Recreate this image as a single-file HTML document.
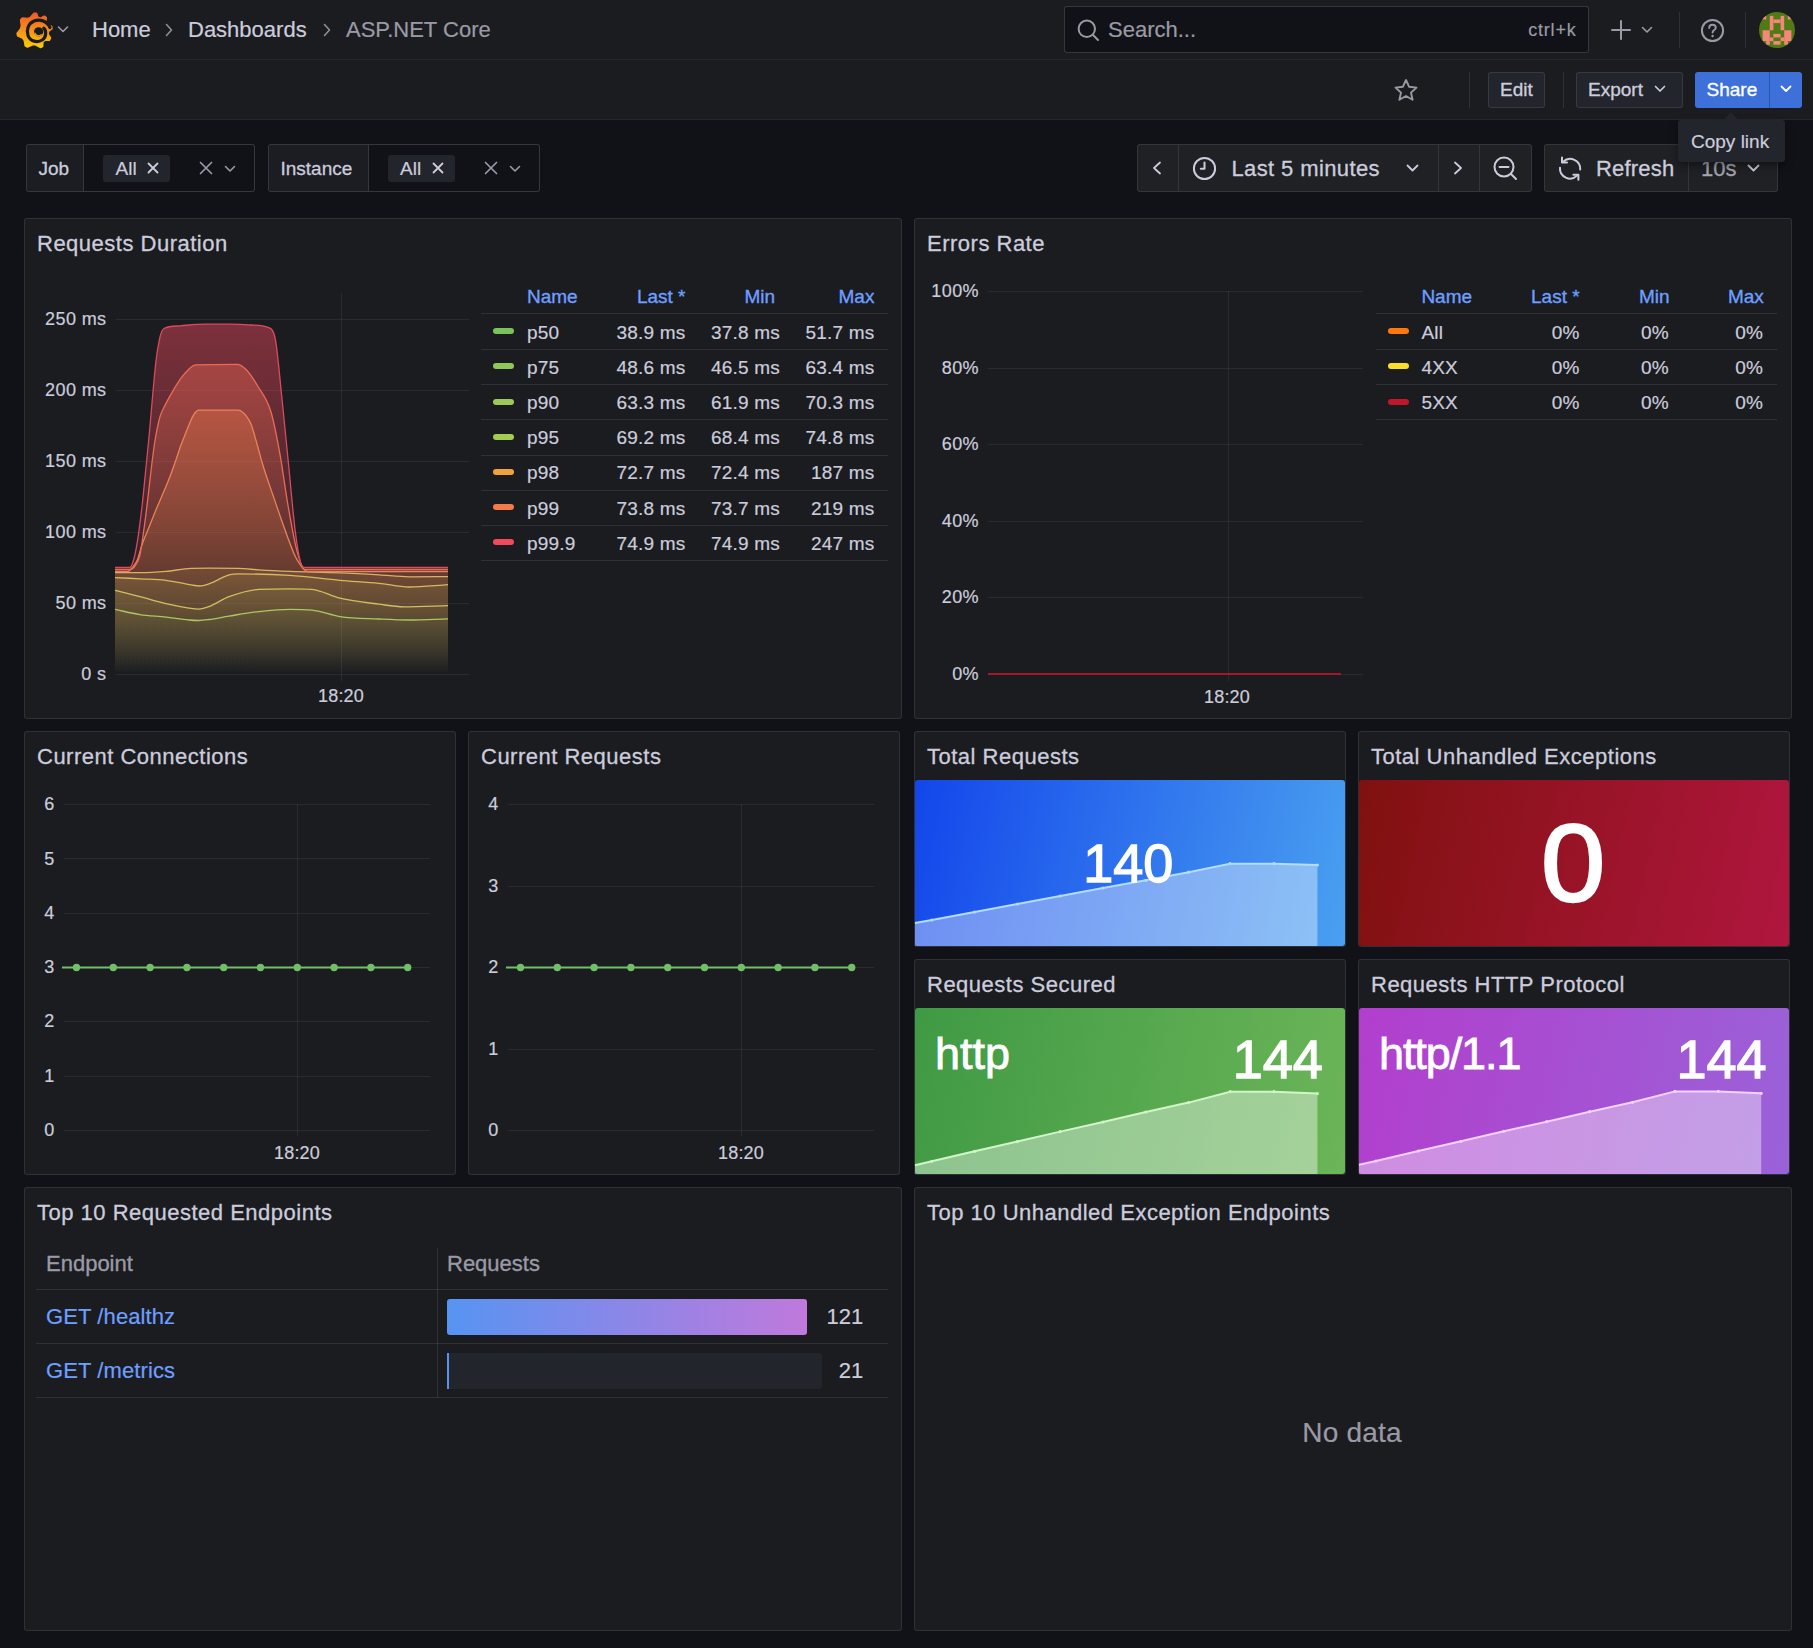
<!DOCTYPE html>
<html><head><meta charset="utf-8"><title>ASP.NET Core - Dashboards - Grafana</title>
<style>
html,body{margin:0;padding:0;}
body{width:1813px;height:1648px;overflow:hidden;background:#111217;position:relative;font-family:"Liberation Sans",sans-serif;}
.t{position:absolute;line-height:1;white-space:nowrap;-webkit-text-stroke-width:0.2px;}
svg{overflow:visible;}
</style></head><body>
<div style="position:absolute;left:0px;top:0px;width:1813px;height:59px;background:#1a1c20;"></div>
<div style="position:absolute;left:0px;top:59px;width:1813px;height:1px;background:rgba(204,204,220,0.12);"></div>
<div style="position:absolute;left:0px;top:60px;width:1813px;height:59px;background:#1a1c20;"></div>
<div style="position:absolute;left:0px;top:119px;width:1813px;height:1px;background:rgba(204,204,220,0.12);"></div>
<svg style="position:absolute;left:17px;top:12px;" width="34" height="37" viewBox="0 0 34 37">
<defs><linearGradient id="glg" x1="0" y1="0" x2="0" y2="1">
<stop offset="0" stop-color="#f05a28"/><stop offset="1" stop-color="#fbca0a"/></linearGradient></defs>
<polygon fill="url(#glg)" stroke="url(#glg)" stroke-width="1.6" stroke-linejoin="round" points="17.04,1.21 19.49,1.31 20.95,5.23 23.69,6.24 27.34,4.21 29.28,5.72 28.61,10.28 30.14,12.77 34.50,14.24 34.97,16.66 31.49,19.41 31.05,22.31 33.58,25.96 32.43,28.13 28.01,28.05 25.86,30.03 25.57,34.44 23.32,35.41 18.43,32.77 15.50,32.66 10.43,34.92 8.25,33.77 7.34,28.43 5.56,26.10 0.63,23.83 0.10,21.43 3.66,16.68 4.40,13.85 3.63,7.96 5.27,6.14 10.77,6.53 13.47,5.39"/>
<path fill="none" stroke="#181b1f" stroke-width="3.2" stroke-linecap="round" d="M33,15.5 C30,8.5 22.5,7 17,9 C11,11.5 9.2,18.5 11,23.5 C13.2,29.5 20.5,31 25.2,28 C29.2,25.2 29.8,19.5 26.8,16.2"/>
<circle cx="21.6" cy="19.8" r="4.6" fill="#181b1f"/>
<path fill="none" stroke="#f7a01c" stroke-width="1.3" stroke-linecap="round" d="M24.2,22.8 C22,24.6 18.8,23.8 18,21.2"/>
</svg>
<svg style="position:absolute;left:57px;top:25px;" width="12" height="9" viewBox="0 0 12 9"><polyline points="1.5,2 6,6.5 10.5,2" fill="none" stroke="#9a9aa6" stroke-width="1.6" stroke-linecap="round" stroke-linejoin="round"/></svg>
<div class="t" style="top:18.58px;font-size:22px;color:#ccccdc;left:92.00px;">Home</div>
<svg style="position:absolute;left:164px;top:22px;" width="10" height="16" viewBox="0 0 10 16"><polyline points="2.5,2.5 7.5,8 2.5,13.5" fill="none" stroke="#8e8e9a" stroke-width="1.6" stroke-linecap="round" stroke-linejoin="round"/></svg>
<div class="t" style="top:18.58px;font-size:22px;color:#ccccdc;left:188.00px;">Dashboards</div>
<svg style="position:absolute;left:322px;top:22px;" width="10" height="16" viewBox="0 0 10 16"><polyline points="2.5,2.5 7.5,8 2.5,13.5" fill="none" stroke="#8e8e9a" stroke-width="1.6" stroke-linecap="round" stroke-linejoin="round"/></svg>
<div class="t" style="top:18.58px;font-size:22px;color:#9a9aa6;left:346.00px;">ASP.NET Core</div>
<div style="position:absolute;left:1064px;top:6px;width:525px;height:47px;box-sizing:border-box;background:#111217;border:1px solid rgba(204,204,220,0.2);border-radius:3px;"></div>
<svg style="position:absolute;left:1077px;top:19px;" width="23" height="23" viewBox="0 0 23 23"><circle cx="9.8" cy="9.8" r="8.2" fill="none" stroke="#9a9aa6" stroke-width="2"/><line x1="15.8" y1="15.8" x2="21" y2="21" stroke="#9a9aa6" stroke-width="2" stroke-linecap="round"/></svg>
<div class="t" style="top:18.58px;font-size:22px;color:#9a9aa6;left:1108.00px;">Search...</div>
<div class="t" style="top:21.26px;font-size:18px;color:#9a9aa6;letter-spacing:0.8px;right:236.50px;">ctrl+k</div>
<svg style="position:absolute;left:1610px;top:19px;" width="22" height="22" viewBox="0 0 22 22"><line x1="11" y1="2" x2="11" y2="20" stroke="#9a9aa6" stroke-width="2" stroke-linecap="round"/><line x1="2" y1="11" x2="20" y2="11" stroke="#9a9aa6" stroke-width="2" stroke-linecap="round"/></svg>
<svg style="position:absolute;left:1641px;top:26px;" width="12" height="8" viewBox="0 0 12 8"><polyline points="1.5,1.5 6,6 10.5,1.5" fill="none" stroke="#9a9aa6" stroke-width="1.6" stroke-linecap="round" stroke-linejoin="round"/></svg>
<div style="position:absolute;left:1679px;top:12px;width:1px;height:36px;background:rgba(204,204,220,0.12);"></div>
<svg style="position:absolute;left:1700px;top:18px;" width="25" height="25" viewBox="0 0 25 25"><circle cx="12.5" cy="12.5" r="10.6" fill="none" stroke="#9a9aa6" stroke-width="2"/><path d="M9.2,10 C9.2,7.8 10.8,6.8 12.5,6.8 C14.4,6.8 15.8,8 15.8,9.8 C15.8,12 12.6,12.2 12.6,14.5" fill="none" stroke="#9a9aa6" stroke-width="1.9" stroke-linecap="round"/><circle cx="12.6" cy="18" r="1.2" fill="#9a9aa6"/></svg>
<div style="position:absolute;left:1745px;top:12px;width:1px;height:36px;background:rgba(204,204,220,0.12);"></div>
<svg style="position:absolute;left:1759px;top:12px;" width="36" height="36" viewBox="0 0 36 36">
<defs><clipPath id="avc"><circle cx="18" cy="18" r="18"/></clipPath></defs>
<g clip-path="url(#avc)">
<rect width="36" height="36" fill="#507a16"/>
<g fill="#f4877a"><rect x="3.60" y="3.87" width="3.60" height="3.60"/><rect x="28.80" y="3.87" width="3.60" height="3.60"/><rect x="10.80" y="3.87" width="3.60" height="14.40"/><rect x="21.60" y="3.87" width="3.60" height="14.40"/><rect x="14.40" y="7.47" width="7.20" height="3.60"/><rect x="3.60" y="18.27" width="7.20" height="10.80"/><rect x="25.20" y="18.27" width="7.20" height="10.80"/><rect x="14.40" y="21.87" width="7.20" height="3.60"/><rect x="10.80" y="25.47" width="3.60" height="3.60"/><rect x="21.60" y="25.47" width="3.60" height="3.60"/><rect x="7.20" y="29.07" width="3.60" height="3.60"/><rect x="25.20" y="29.07" width="3.60" height="3.60"/><rect x="14.40" y="29.07" width="7.20" height="3.60"/></g></g>
</svg>
<svg style="position:absolute;left:1393px;top:78px;" width="26" height="24" viewBox="0 0 26 24"><polygon points="13,2 16.2,8.8 23.5,9.6 18,14.6 19.6,21.8 13,18 6.4,21.8 8,14.6 2.5,9.6 9.8,8.8" fill="none" stroke="#9a9aa6" stroke-width="1.9" stroke-linejoin="round"/></svg>
<div style="position:absolute;left:1469px;top:72px;width:1px;height:36px;background:rgba(204,204,220,0.12);"></div>
<div style="position:absolute;left:1488px;top:72px;width:57px;height:36px;box-sizing:border-box;background:#22252b;border:1px solid rgba(204,204,220,0.12);border-radius:3px;"></div>
<div class="t" style="top:80.22px;font-size:19px;color:#ccccdc;font-weight:700;left:1500.00px;font-weight:400;-webkit-text-stroke:0.35px #ccccdc;">Edit</div>
<div style="position:absolute;left:1563px;top:72px;width:1px;height:36px;background:rgba(204,204,220,0.12);"></div>
<div style="position:absolute;left:1576px;top:72px;width:107px;height:36px;box-sizing:border-box;background:#22252b;border:1px solid rgba(204,204,220,0.12);border-radius:3px;"></div>
<div class="t" style="top:80.22px;font-size:19px;color:#ccccdc;left:1588.00px;-webkit-text-stroke:0.35px #ccccdc;">Export</div>
<svg style="position:absolute;left:1654px;top:85px;" width="12" height="8" viewBox="0 0 12 8"><polyline points="1.5,1.5 6,6 10.5,1.5" fill="none" stroke="#ccccdc" stroke-width="1.7" stroke-linecap="round" stroke-linejoin="round"/></svg>
<div style="position:absolute;left:1695px;top:72px;width:107px;height:36px;background:#3d71d9;border-radius:3px;"></div>
<div style="position:absolute;left:1769px;top:72px;width:1px;height:36px;background:#2a55ad;"></div>
<div class="t" style="top:80.22px;font-size:19px;color:#ffffff;left:1706.50px;-webkit-text-stroke:0.35px #ffffff;">Share</div>
<svg style="position:absolute;left:1780px;top:85px;" width="12" height="8" viewBox="0 0 12 8"><polyline points="1.5,1.5 6,6 10.5,1.5" fill="none" stroke="#ffffff" stroke-width="1.8" stroke-linecap="round" stroke-linejoin="round"/></svg>
<div style="position:absolute;left:26px;top:144px;width:229px;height:48px;box-sizing:border-box;background:#111217;border:1px solid rgba(204,204,220,0.2);border-radius:3px;"></div>
<div style="position:absolute;left:27px;top:145px;width:56px;height:46px;background:#1b1d22;border-radius:2px 0 0 2px;"></div>
<div style="position:absolute;left:83px;top:145px;width:1px;height:46px;background:rgba(204,204,220,0.2);"></div>
<div class="t" style="top:159.12px;font-size:19px;color:#ccccdc;left:38.50px;-webkit-text-stroke:0.3px #ccccdc;">Job</div>
<div style="position:absolute;left:103px;top:155px;width:67px;height:27px;background:#22252b;border-radius:3px;"></div>
<div class="t" style="top:159.12px;font-size:19px;color:#ccccdc;left:115.50px;">All</div>
<svg style="position:absolute;left:146.5px;top:162px;" width="12" height="12" viewBox="0 0 12 12"><path d="M1.5,1.5 L10.5,10.5 M10.5,1.5 L1.5,10.5" stroke="#ccccdc" stroke-width="1.8" stroke-linecap="round"/></svg>
<svg style="position:absolute;left:199px;top:161px;" width="14" height="14" viewBox="0 0 14 14"><path d="M1.5,1.5 L12.5,12.5 M12.5,1.5 L1.5,12.5" stroke="#9a9aa6" stroke-width="1.7" stroke-linecap="round"/></svg>
<svg style="position:absolute;left:224px;top:165px;" width="12" height="8" viewBox="0 0 12 8"><polyline points="1.5,1.5 6,6 10.5,1.5" fill="none" stroke="#9a9aa6" stroke-width="1.6" stroke-linecap="round" stroke-linejoin="round"/></svg>
<div style="position:absolute;left:268px;top:144px;width:272px;height:48px;box-sizing:border-box;background:#111217;border:1px solid rgba(204,204,220,0.2);border-radius:3px;"></div>
<div style="position:absolute;left:269px;top:145px;width:99px;height:46px;background:#1b1d22;border-radius:2px 0 0 2px;"></div>
<div style="position:absolute;left:368px;top:145px;width:1px;height:46px;background:rgba(204,204,220,0.2);"></div>
<div class="t" style="top:159.12px;font-size:19px;color:#ccccdc;left:280.50px;-webkit-text-stroke:0.3px #ccccdc;">Instance</div>
<div style="position:absolute;left:388px;top:155px;width:67px;height:27px;background:#22252b;border-radius:3px;"></div>
<div class="t" style="top:159.12px;font-size:19px;color:#ccccdc;left:400.00px;">All</div>
<svg style="position:absolute;left:431.5px;top:162px;" width="12" height="12" viewBox="0 0 12 12"><path d="M1.5,1.5 L10.5,10.5 M10.5,1.5 L1.5,10.5" stroke="#ccccdc" stroke-width="1.8" stroke-linecap="round"/></svg>
<svg style="position:absolute;left:484px;top:161px;" width="14" height="14" viewBox="0 0 14 14"><path d="M1.5,1.5 L12.5,12.5 M12.5,1.5 L1.5,12.5" stroke="#9a9aa6" stroke-width="1.7" stroke-linecap="round"/></svg>
<svg style="position:absolute;left:509px;top:165px;" width="12" height="8" viewBox="0 0 12 8"><polyline points="1.5,1.5 6,6 10.5,1.5" fill="none" stroke="#9a9aa6" stroke-width="1.6" stroke-linecap="round" stroke-linejoin="round"/></svg>
<div style="position:absolute;left:1137px;top:144px;width:395px;height:48px;box-sizing:border-box;background:#1f2125;border:1px solid rgba(204,204,220,0.12);border-radius:3px;"></div>
<div style="position:absolute;left:1178px;top:145px;width:1px;height:46px;background:rgba(204,204,220,0.12);"></div>
<div style="position:absolute;left:1438px;top:145px;width:1px;height:46px;background:rgba(204,204,220,0.12);"></div>
<div style="position:absolute;left:1479px;top:145px;width:1px;height:46px;background:rgba(204,204,220,0.12);"></div>
<svg style="position:absolute;left:1150px;top:160px;" width="14" height="16" viewBox="0 0 14 16"><polyline points="10,2.5 4,8 10,13.5" fill="none" stroke="#ccccdc" stroke-width="1.8" stroke-linecap="round" stroke-linejoin="round"/></svg>
<svg style="position:absolute;left:1192px;top:156px;" width="25" height="25" viewBox="0 0 25 25"><circle cx="12.5" cy="12.5" r="10.6" fill="none" stroke="#ccccdc" stroke-width="2"/><polyline points="12.5,6.5 12.5,12.8 8.8,12.8" fill="none" stroke="#ccccdc" stroke-width="2" stroke-linecap="round" stroke-linejoin="round"/></svg>
<div class="t" style="top:157.88px;font-size:22px;color:#ccccdc;letter-spacing:0.38px;left:1231.50px;-webkit-text-stroke:0.3px #ccccdc;">Last 5 minutes</div>
<svg style="position:absolute;left:1406px;top:164px;" width="14" height="9" viewBox="0 0 14 9"><polyline points="1.5,1.5 6.5,6.5 11.5,1.5" fill="none" stroke="#ccccdc" stroke-width="1.8" stroke-linecap="round" stroke-linejoin="round"/></svg>
<svg style="position:absolute;left:1451px;top:160px;" width="14" height="16" viewBox="0 0 14 16"><polyline points="4,2.5 10,8 4,13.5" fill="none" stroke="#ccccdc" stroke-width="1.8" stroke-linecap="round" stroke-linejoin="round"/></svg>
<svg style="position:absolute;left:1493px;top:156px;" width="26" height="26" viewBox="0 0 26 26"><circle cx="11" cy="11" r="9.5" fill="none" stroke="#ccccdc" stroke-width="2"/><line x1="6.5" y1="11" x2="15.5" y2="11" stroke="#ccccdc" stroke-width="2" stroke-linecap="round"/><line x1="18" y1="18" x2="23" y2="23" stroke="#ccccdc" stroke-width="2" stroke-linecap="round"/></svg>
<div style="position:absolute;left:1544px;top:144px;width:234px;height:48px;box-sizing:border-box;background:#1f2125;border:1px solid rgba(204,204,220,0.12);border-radius:3px;"></div>
<div style="position:absolute;left:1688px;top:145px;width:1px;height:46px;background:rgba(204,204,220,0.12);"></div>
<svg style="position:absolute;left:1557px;top:155px;" width="26" height="27" viewBox="0 0 26 27"><g fill="none" stroke="#ccccdc" stroke-width="2" stroke-linecap="round" stroke-linejoin="round"><path d="M6.2,6.8 A10,10 0 0 1 23.2,14.5"/><polyline points="5,2.5 5,7.6 10,7.6"/><path d="M20,20.6 A10,10 0 0 1 3,12.8"/><polyline points="21.4,24.8 21.4,19.7 16.4,19.7"/></g></svg>
<div class="t" style="top:157.88px;font-size:22px;color:#ccccdc;letter-spacing:0.2px;left:1596.00px;-webkit-text-stroke:0.3px #ccccdc;">Refresh</div>
<div class="t" style="top:157.68px;font-size:22px;color:#a4a4ae;left:1701.00px;-webkit-text-stroke:0.3px #a4a4ae;">10s</div>
<svg style="position:absolute;left:1747px;top:164px;" width="13" height="8" viewBox="0 0 13 8"><polyline points="1.5,1.5 6.5,6.5 11.5,1.5" fill="none" stroke="#ccccdc" stroke-width="1.8" stroke-linecap="round" stroke-linejoin="round"/></svg>
<div style="position:absolute;left:1678px;top:120px;width:107px;height:42px;background:#22252b;border-radius:3px;box-shadow:0 4px 8px rgba(0,0,0,0.4);"></div>
<svg style="position:absolute;left:1723px;top:111px;" width="16" height="10" viewBox="0 0 16 10"><polygon points="0,9.5 8,1 16,9.5" fill="#22252b"/></svg>
<div class="t" style="top:132.32px;font-size:19px;color:#ccccdc;left:1691.00px;">Copy link</div>
<div style="position:absolute;left:24px;top:218px;width:878px;height:501px;box-sizing:border-box;background:#1a1c20;border:1px solid rgba(204,204,220,0.12);border-radius:3px;"></div>
<div class="t" style="top:233.08px;font-size:22px;color:#ccccdc;letter-spacing:0.5px;left:37.00px;-webkit-text-stroke:0.3px #ccccdc;">Requests Duration</div>
<div style="position:absolute;left:914px;top:218px;width:878px;height:501px;box-sizing:border-box;background:#1a1c20;border:1px solid rgba(204,204,220,0.12);border-radius:3px;"></div>
<div class="t" style="top:233.08px;font-size:22px;color:#ccccdc;letter-spacing:0.5px;left:927.00px;-webkit-text-stroke:0.3px #ccccdc;">Errors Rate</div>
<div style="position:absolute;left:24px;top:731px;width:432px;height:444px;box-sizing:border-box;background:#1a1c20;border:1px solid rgba(204,204,220,0.12);border-radius:3px;"></div>
<div class="t" style="top:746.08px;font-size:22px;color:#ccccdc;letter-spacing:0.5px;left:37.00px;-webkit-text-stroke:0.3px #ccccdc;">Current Connections</div>
<div style="position:absolute;left:468px;top:731px;width:432px;height:444px;box-sizing:border-box;background:#1a1c20;border:1px solid rgba(204,204,220,0.12);border-radius:3px;"></div>
<div class="t" style="top:746.08px;font-size:22px;color:#ccccdc;letter-spacing:0.5px;left:481.00px;-webkit-text-stroke:0.3px #ccccdc;">Current Requests</div>
<div style="position:absolute;left:914px;top:731px;width:432px;height:216px;box-sizing:border-box;background:#1a1c20;border:1px solid rgba(204,204,220,0.12);border-radius:3px;"></div>
<div class="t" style="top:746.08px;font-size:22px;color:#ccccdc;letter-spacing:0.5px;left:927.00px;-webkit-text-stroke:0.3px #ccccdc;">Total Requests</div>
<div style="position:absolute;left:1358px;top:731px;width:432px;height:216px;box-sizing:border-box;background:#1a1c20;border:1px solid rgba(204,204,220,0.12);border-radius:3px;"></div>
<div class="t" style="top:746.08px;font-size:22px;color:#ccccdc;letter-spacing:0.5px;left:1371.00px;-webkit-text-stroke:0.3px #ccccdc;">Total Unhandled Exceptions</div>
<div style="position:absolute;left:914px;top:959px;width:432px;height:216px;box-sizing:border-box;background:#1a1c20;border:1px solid rgba(204,204,220,0.12);border-radius:3px;"></div>
<div class="t" style="top:974.08px;font-size:22px;color:#ccccdc;letter-spacing:0.5px;left:927.00px;-webkit-text-stroke:0.3px #ccccdc;">Requests Secured</div>
<div style="position:absolute;left:1358px;top:959px;width:432px;height:216px;box-sizing:border-box;background:#1a1c20;border:1px solid rgba(204,204,220,0.12);border-radius:3px;"></div>
<div class="t" style="top:974.08px;font-size:22px;color:#ccccdc;letter-spacing:0.5px;left:1371.00px;-webkit-text-stroke:0.3px #ccccdc;">Requests HTTP Protocol</div>
<div style="position:absolute;left:24px;top:1187px;width:878px;height:444px;box-sizing:border-box;background:#1a1c20;border:1px solid rgba(204,204,220,0.12);border-radius:3px;"></div>
<div class="t" style="top:1202.08px;font-size:22px;color:#ccccdc;letter-spacing:0.5px;left:37.00px;-webkit-text-stroke:0.3px #ccccdc;">Top 10 Requested Endpoints</div>
<div style="position:absolute;left:914px;top:1187px;width:878px;height:444px;box-sizing:border-box;background:#1a1c20;border:1px solid rgba(204,204,220,0.12);border-radius:3px;"></div>
<div class="t" style="top:1202.08px;font-size:22px;color:#ccccdc;letter-spacing:0.5px;left:927.00px;-webkit-text-stroke:0.3px #ccccdc;">Top 10 Unhandled Exception Endpoints</div>
<div style="position:absolute;left:116px;top:319px;width:353px;height:1px;background:rgba(204,204,220,0.09);"></div>
<div class="t" style="top:309.96px;font-size:18px;color:#ccccdc;letter-spacing:0.4px;right:1706.50px;">250 ms</div>
<div style="position:absolute;left:116px;top:390px;width:353px;height:1px;background:rgba(204,204,220,0.09);"></div>
<div class="t" style="top:380.96px;font-size:18px;color:#ccccdc;letter-spacing:0.4px;right:1706.50px;">200 ms</div>
<div style="position:absolute;left:116px;top:461px;width:353px;height:1px;background:rgba(204,204,220,0.09);"></div>
<div class="t" style="top:451.96px;font-size:18px;color:#ccccdc;letter-spacing:0.4px;right:1706.50px;">150 ms</div>
<div style="position:absolute;left:116px;top:532px;width:353px;height:1px;background:rgba(204,204,220,0.09);"></div>
<div class="t" style="top:522.96px;font-size:18px;color:#ccccdc;letter-spacing:0.4px;right:1706.50px;">100 ms</div>
<div style="position:absolute;left:116px;top:603px;width:353px;height:1px;background:rgba(204,204,220,0.09);"></div>
<div class="t" style="top:593.96px;font-size:18px;color:#ccccdc;letter-spacing:0.4px;right:1706.50px;">50 ms</div>
<div style="position:absolute;left:116px;top:674px;width:353px;height:1px;background:rgba(204,204,220,0.09);"></div>
<div class="t" style="top:664.96px;font-size:18px;color:#ccccdc;letter-spacing:0.4px;right:1706.50px;">0 s</div>
<div style="position:absolute;left:341px;top:293px;width:1px;height:388px;background:rgba(204,204,220,0.09);"></div>
<div class="t" style="top:687.36px;font-size:18px;color:#ccccdc;letter-spacing:0.2px;left:41.00px;width:600px;text-align:center;">18:20</div>
<svg style="position:absolute;left:0px;top:0px;pointer-events:none;" width="1813" height="1648" viewBox="0 0 1813 1648"><defs><linearGradient id="g0" gradientUnits="userSpaceOnUse" x1="0" y1="293" x2="0" y2="674"><stop offset="0" stop-color="#7ac35c" stop-opacity="0.5"/><stop offset="1" stop-color="#7ac35c" stop-opacity="0"/></linearGradient><linearGradient id="g1" gradientUnits="userSpaceOnUse" x1="0" y1="293" x2="0" y2="674"><stop offset="0" stop-color="#90c75a" stop-opacity="0.5"/><stop offset="1" stop-color="#90c75a" stop-opacity="0"/></linearGradient><linearGradient id="g2" gradientUnits="userSpaceOnUse" x1="0" y1="293" x2="0" y2="674"><stop offset="0" stop-color="#9cc95a" stop-opacity="0.5"/><stop offset="1" stop-color="#9cc95a" stop-opacity="0"/></linearGradient><linearGradient id="g3" gradientUnits="userSpaceOnUse" x1="0" y1="293" x2="0" y2="674"><stop offset="0" stop-color="#a4cb52" stop-opacity="0.5"/><stop offset="1" stop-color="#a4cb52" stop-opacity="0"/></linearGradient><linearGradient id="g4" gradientUnits="userSpaceOnUse" x1="0" y1="293" x2="0" y2="674"><stop offset="0" stop-color="#f2a23c" stop-opacity="0.5"/><stop offset="1" stop-color="#f2a23c" stop-opacity="0"/></linearGradient><linearGradient id="g5" gradientUnits="userSpaceOnUse" x1="0" y1="293" x2="0" y2="674"><stop offset="0" stop-color="#f27a4c" stop-opacity="0.5"/><stop offset="1" stop-color="#f27a4c" stop-opacity="0"/></linearGradient><linearGradient id="g6" gradientUnits="userSpaceOnUse" x1="0" y1="293" x2="0" y2="674"><stop offset="0" stop-color="#f2495c" stop-opacity="0.5"/><stop offset="1" stop-color="#f2495c" stop-opacity="0"/></linearGradient></defs><path d="M115.00,609.40 C123.33,611.13 131.67,613.33 140.00,614.60 C148.67,615.92 157.33,616.14 166.00,617.10 C173.67,617.95 181.33,619.33 189.00,620.00 C192.33,620.29 195.67,620.50 199.00,620.50 C202.33,620.50 205.67,619.95 209.00,619.50 C215.67,618.60 222.33,617.17 229.00,616.10 C239.00,614.50 249.00,612.70 259.00,611.60 C269.33,610.46 279.67,609.40 290.00,609.40 C297.33,609.40 304.67,609.40 312.00,610.10 C321.33,610.99 330.67,615.23 340.00,616.60 C353.00,618.51 366.00,618.38 379.00,619.00 C389.00,619.47 399.00,620.00 409.00,620.00 C422.00,620.00 435.00,619.20 448.00,618.80 L448,674 L115,674 Z" fill="url(#g0)"/><path d="M115.00,590.30 C123.33,592.43 131.67,594.51 140.00,596.70 C148.67,598.98 157.33,601.70 166.00,603.70 C173.67,605.47 181.33,606.98 189.00,608.10 C192.33,608.59 195.67,609.10 199.00,609.10 C202.33,609.10 205.67,607.84 209.00,606.60 C215.67,604.12 222.33,599.17 229.00,596.70 C239.00,592.99 249.00,589.78 259.00,589.30 C269.33,588.80 279.67,588.80 290.00,588.80 C297.33,588.80 304.67,588.80 312.00,589.30 C321.33,589.94 330.67,596.00 340.00,598.20 C353.00,601.27 366.00,602.52 379.00,604.20 C387.33,605.27 395.67,606.80 404.00,606.80 C418.67,606.80 433.33,606.00 448.00,605.60 L448,674 L115,674 Z" fill="url(#g1)"/><path d="M115.00,577.60 C123.33,578.00 131.67,578.36 140.00,578.80 C148.67,579.26 157.33,579.27 166.00,580.30 C174.33,581.29 182.67,583.42 191.00,584.80 C193.67,585.24 196.33,586.00 199.00,586.00 C202.33,586.00 205.67,584.91 209.00,583.80 C215.67,581.58 222.33,576.72 229.00,574.90 C232.33,573.99 235.67,573.90 239.00,573.90 C256.00,573.90 273.00,574.32 290.00,575.40 C306.67,576.46 323.33,578.84 340.00,580.30 C353.00,581.44 366.00,582.00 379.00,583.30 C389.00,584.30 399.00,587.00 409.00,587.00 C422.00,587.00 435.00,585.40 448.00,584.60 L448,674 L115,674 Z" fill="url(#g2)"/><path d="M115.00,572.70 C123.33,572.70 131.67,572.70 140.00,572.70 C148.67,572.70 157.33,572.14 166.00,571.40 C174.33,570.69 182.67,568.68 191.00,568.40 C197.00,568.20 203.00,568.20 209.00,568.20 C219.00,568.20 229.00,568.20 239.00,568.40 C245.67,568.53 252.33,569.49 259.00,569.90 C269.33,570.54 279.67,571.00 290.00,571.40 C306.67,572.05 323.33,572.22 340.00,572.90 C353.00,573.43 366.00,574.15 379.00,574.90 C389.00,575.47 399.00,576.80 409.00,576.80 C422.00,576.80 435.00,576.67 448.00,576.60 L448,674 L115,674 Z" fill="url(#g3)"/><path d="M115.00,571.50 C119.33,571.50 123.67,571.50 128.00,571.50 C129.17,571.50 130.33,569.85 131.50,568.50 C133.43,566.25 135.37,564.54 137.30,560.00 C138.90,556.24 140.50,549.08 142.10,544.50 C144.53,537.54 146.97,532.37 149.40,526.30 C151.83,520.23 154.27,513.97 156.70,508.10 C159.13,502.23 161.57,496.89 164.00,491.10 C166.00,486.34 168.00,481.72 170.00,476.50 C172.03,471.19 174.07,465.34 176.10,459.50 C177.73,454.81 179.37,449.49 181.00,445.00 C182.60,440.60 184.20,436.81 185.80,432.80 C187.43,428.71 189.07,424.26 190.70,420.70 C191.97,417.94 193.23,415.22 194.50,413.50 C195.83,411.69 197.17,410.20 198.50,410.20 C211.67,410.20 224.83,410.20 238.00,410.20 C240.00,410.20 242.00,411.70 244.00,413.50 C245.33,414.70 246.67,416.44 248.00,418.50 C249.00,420.04 250.00,421.42 251.00,424.00 C253.00,429.17 255.00,437.08 257.00,444.00 C259.00,450.92 261.00,458.94 263.00,465.50 C266.33,476.44 269.67,485.53 273.00,495.30 C276.90,506.73 280.80,518.28 284.70,529.00 C288.00,538.07 291.30,547.65 294.60,554.90 C296.40,558.85 298.20,561.77 300.00,564.50 C301.33,566.52 302.67,568.33 304.00,569.50 C305.33,570.67 306.67,571.50 308.00,571.50 C354.67,571.50 401.33,571.50 448.00,571.50 L448,674 L115,674 Z" fill="url(#g4)"/><path d="M115.00,569.50 C120.00,569.50 125.00,569.50 130.00,569.50 C131.67,569.50 133.33,568.36 135.00,566.00 C136.57,563.78 138.13,562.24 139.70,556.00 C140.50,552.82 141.30,547.30 142.10,542.00 C143.73,531.19 145.37,518.83 147.00,505.70 C148.40,494.45 149.80,480.85 151.20,469.30 C152.23,460.77 153.27,451.98 154.30,445.00 C155.30,438.25 156.30,432.87 157.30,428.00 C158.30,423.13 159.30,418.95 160.30,415.80 C161.93,410.66 163.57,408.20 165.20,404.90 C167.63,399.98 170.07,395.73 172.50,391.60 C175.33,386.79 178.17,382.08 181.00,378.20 C183.43,374.87 185.87,371.92 188.30,369.70 C190.73,367.48 193.17,364.99 195.60,364.90 C209.40,364.40 223.20,364.40 237.00,364.40 C240.00,364.40 243.00,366.52 246.00,369.50 C250.00,373.47 254.00,379.74 258.00,386.50 C262.33,393.82 266.67,397.54 271.00,412.00 C274.00,422.01 277.00,437.77 280.00,454.40 C282.67,469.18 285.33,490.11 288.00,505.40 C291.00,522.60 294.00,540.14 297.00,551.20 C299.67,561.04 302.33,569.50 305.00,569.50 C352.67,569.50 400.33,569.50 448.00,569.50 L448,674 L115,674 Z" fill="url(#g5)"/><path d="M115.00,567.50 C119.83,567.50 124.67,567.50 129.50,567.50 C130.87,567.50 132.23,564.57 133.60,560.00 C134.83,555.87 136.07,549.66 137.30,542.00 C138.90,532.06 140.50,519.62 142.10,505.70 C143.33,494.97 144.57,481.62 145.80,469.30 C147.00,457.31 148.20,445.78 149.40,432.80 C150.63,419.46 151.87,403.61 153.10,390.30 C154.10,379.51 155.10,368.18 156.10,360.00 C157.10,351.82 158.10,346.25 159.10,341.20 C159.90,337.16 160.70,334.09 161.50,332.00 C162.33,329.82 163.17,328.92 164.00,328.50 C169.33,325.83 174.67,326.20 180.00,325.80 C188.33,325.18 196.67,324.20 205.00,324.20 C213.33,324.20 221.67,324.20 230.00,324.20 C237.00,324.20 244.00,324.72 251.00,325.00 C257.50,325.26 264.00,325.01 270.50,328.30 C272.20,329.16 273.90,330.84 275.60,340.60 C277.60,352.08 279.60,375.93 281.60,395.00 C283.87,416.61 286.13,440.35 288.40,463.00 C290.67,485.65 292.93,512.81 295.20,530.90 C296.90,544.47 298.60,555.08 300.30,561.40 C301.70,566.60 303.10,567.50 304.50,567.50 C352.33,567.50 400.17,567.50 448.00,567.50 L448,674 L115,674 Z" fill="url(#g6)"/><path d="M115.00,609.40 C123.33,611.13 131.67,613.33 140.00,614.60 C148.67,615.92 157.33,616.14 166.00,617.10 C173.67,617.95 181.33,619.33 189.00,620.00 C192.33,620.29 195.67,620.50 199.00,620.50 C202.33,620.50 205.67,619.95 209.00,619.50 C215.67,618.60 222.33,617.17 229.00,616.10 C239.00,614.50 249.00,612.70 259.00,611.60 C269.33,610.46 279.67,609.40 290.00,609.40 C297.33,609.40 304.67,609.40 312.00,610.10 C321.33,610.99 330.67,615.23 340.00,616.60 C353.00,618.51 366.00,618.38 379.00,619.00 C389.00,619.47 399.00,620.00 409.00,620.00 C422.00,620.00 435.00,619.20 448.00,618.80" fill="none" stroke="#acc764" stroke-width="1.3"/><path d="M115.00,590.30 C123.33,592.43 131.67,594.51 140.00,596.70 C148.67,598.98 157.33,601.70 166.00,603.70 C173.67,605.47 181.33,606.98 189.00,608.10 C192.33,608.59 195.67,609.10 199.00,609.10 C202.33,609.10 205.67,607.84 209.00,606.60 C215.67,604.12 222.33,599.17 229.00,596.70 C239.00,592.99 249.00,589.78 259.00,589.30 C269.33,588.80 279.67,588.80 290.00,588.80 C297.33,588.80 304.67,588.80 312.00,589.30 C321.33,589.94 330.67,596.00 340.00,598.20 C353.00,601.27 366.00,602.52 379.00,604.20 C387.33,605.27 395.67,606.80 404.00,606.80 C418.67,606.80 433.33,606.00 448.00,605.60" fill="none" stroke="#d2bf62" stroke-width="1.3"/><path d="M115.00,577.60 C123.33,578.00 131.67,578.36 140.00,578.80 C148.67,579.26 157.33,579.27 166.00,580.30 C174.33,581.29 182.67,583.42 191.00,584.80 C193.67,585.24 196.33,586.00 199.00,586.00 C202.33,586.00 205.67,584.91 209.00,583.80 C215.67,581.58 222.33,576.72 229.00,574.90 C232.33,573.99 235.67,573.90 239.00,573.90 C256.00,573.90 273.00,574.32 290.00,575.40 C306.67,576.46 323.33,578.84 340.00,580.30 C353.00,581.44 366.00,582.00 379.00,583.30 C389.00,584.30 399.00,587.00 409.00,587.00 C422.00,587.00 435.00,585.40 448.00,584.60" fill="none" stroke="#d8b862" stroke-width="1.3"/><path d="M115.00,572.70 C123.33,572.70 131.67,572.70 140.00,572.70 C148.67,572.70 157.33,572.14 166.00,571.40 C174.33,570.69 182.67,568.68 191.00,568.40 C197.00,568.20 203.00,568.20 209.00,568.20 C219.00,568.20 229.00,568.20 239.00,568.40 C245.67,568.53 252.33,569.49 259.00,569.90 C269.33,570.54 279.67,571.00 290.00,571.40 C306.67,572.05 323.33,572.22 340.00,572.90 C353.00,573.43 366.00,574.15 379.00,574.90 C389.00,575.47 399.00,576.80 409.00,576.80 C422.00,576.80 435.00,576.67 448.00,576.60" fill="none" stroke="#d9b266" stroke-width="1.3"/><path d="M115.00,571.50 C119.33,571.50 123.67,571.50 128.00,571.50 C129.17,571.50 130.33,569.85 131.50,568.50 C133.43,566.25 135.37,564.54 137.30,560.00 C138.90,556.24 140.50,549.08 142.10,544.50 C144.53,537.54 146.97,532.37 149.40,526.30 C151.83,520.23 154.27,513.97 156.70,508.10 C159.13,502.23 161.57,496.89 164.00,491.10 C166.00,486.34 168.00,481.72 170.00,476.50 C172.03,471.19 174.07,465.34 176.10,459.50 C177.73,454.81 179.37,449.49 181.00,445.00 C182.60,440.60 184.20,436.81 185.80,432.80 C187.43,428.71 189.07,424.26 190.70,420.70 C191.97,417.94 193.23,415.22 194.50,413.50 C195.83,411.69 197.17,410.20 198.50,410.20 C211.67,410.20 224.83,410.20 238.00,410.20 C240.00,410.20 242.00,411.70 244.00,413.50 C245.33,414.70 246.67,416.44 248.00,418.50 C249.00,420.04 250.00,421.42 251.00,424.00 C253.00,429.17 255.00,437.08 257.00,444.00 C259.00,450.92 261.00,458.94 263.00,465.50 C266.33,476.44 269.67,485.53 273.00,495.30 C276.90,506.73 280.80,518.28 284.70,529.00 C288.00,538.07 291.30,547.65 294.60,554.90 C296.40,558.85 298.20,561.77 300.00,564.50 C301.33,566.52 302.67,568.33 304.00,569.50 C305.33,570.67 306.67,571.50 308.00,571.50 C354.67,571.50 401.33,571.50 448.00,571.50" fill="none" stroke="#ea8458" stroke-width="1.3"/><path d="M115.00,569.50 C120.00,569.50 125.00,569.50 130.00,569.50 C131.67,569.50 133.33,568.36 135.00,566.00 C136.57,563.78 138.13,562.24 139.70,556.00 C140.50,552.82 141.30,547.30 142.10,542.00 C143.73,531.19 145.37,518.83 147.00,505.70 C148.40,494.45 149.80,480.85 151.20,469.30 C152.23,460.77 153.27,451.98 154.30,445.00 C155.30,438.25 156.30,432.87 157.30,428.00 C158.30,423.13 159.30,418.95 160.30,415.80 C161.93,410.66 163.57,408.20 165.20,404.90 C167.63,399.98 170.07,395.73 172.50,391.60 C175.33,386.79 178.17,382.08 181.00,378.20 C183.43,374.87 185.87,371.92 188.30,369.70 C190.73,367.48 193.17,364.99 195.60,364.90 C209.40,364.40 223.20,364.40 237.00,364.40 C240.00,364.40 243.00,366.52 246.00,369.50 C250.00,373.47 254.00,379.74 258.00,386.50 C262.33,393.82 266.67,397.54 271.00,412.00 C274.00,422.01 277.00,437.77 280.00,454.40 C282.67,469.18 285.33,490.11 288.00,505.40 C291.00,522.60 294.00,540.14 297.00,551.20 C299.67,561.04 302.33,569.50 305.00,569.50 C352.67,569.50 400.33,569.50 448.00,569.50" fill="none" stroke="#e96c56" stroke-width="1.3"/><path d="M115.00,567.50 C119.83,567.50 124.67,567.50 129.50,567.50 C130.87,567.50 132.23,564.57 133.60,560.00 C134.83,555.87 136.07,549.66 137.30,542.00 C138.90,532.06 140.50,519.62 142.10,505.70 C143.33,494.97 144.57,481.62 145.80,469.30 C147.00,457.31 148.20,445.78 149.40,432.80 C150.63,419.46 151.87,403.61 153.10,390.30 C154.10,379.51 155.10,368.18 156.10,360.00 C157.10,351.82 158.10,346.25 159.10,341.20 C159.90,337.16 160.70,334.09 161.50,332.00 C162.33,329.82 163.17,328.92 164.00,328.50 C169.33,325.83 174.67,326.20 180.00,325.80 C188.33,325.18 196.67,324.20 205.00,324.20 C213.33,324.20 221.67,324.20 230.00,324.20 C237.00,324.20 244.00,324.72 251.00,325.00 C257.50,325.26 264.00,325.01 270.50,328.30 C272.20,329.16 273.90,330.84 275.60,340.60 C277.60,352.08 279.60,375.93 281.60,395.00 C283.87,416.61 286.13,440.35 288.40,463.00 C290.67,485.65 292.93,512.81 295.20,530.90 C296.90,544.47 298.60,555.08 300.30,561.40 C301.70,566.60 303.10,567.50 304.50,567.50 C352.33,567.50 400.17,567.50 448.00,567.50" fill="none" stroke="#dc4a5e" stroke-width="1.3"/></svg>
<div class="t" style="top:287.42px;font-size:19px;color:#6e9fff;left:527.00px;-webkit-text-stroke:0.35px #6e9fff;">Name</div>
<div class="t" style="top:287.42px;font-size:19px;color:#6e9fff;right:1127.50px;-webkit-text-stroke:0.35px #6e9fff;">Last *</div>
<div class="t" style="top:287.42px;font-size:19px;color:#6e9fff;right:1038.00px;-webkit-text-stroke:0.35px #6e9fff;">Min</div>
<div class="t" style="top:287.42px;font-size:19px;color:#6e9fff;right:938.60px;-webkit-text-stroke:0.35px #6e9fff;">Max</div>
<div style="position:absolute;left:481px;top:313px;width:407px;height:1px;background:rgba(204,204,220,0.12);"></div>
<div style="position:absolute;left:493px;top:328px;width:21px;height:6px;background:#7ac35c;border-radius:3px;"></div>
<div class="t" style="top:322.52px;font-size:19px;color:#ccccdc;letter-spacing:0.2px;left:527.00px;">p50</div>
<div class="t" style="top:322.52px;font-size:19px;color:#ccccdc;letter-spacing:0.2px;right:1127.50px;">38.9 ms</div>
<div class="t" style="top:322.52px;font-size:19px;color:#ccccdc;letter-spacing:0.2px;right:1033.00px;">37.8 ms</div>
<div class="t" style="top:322.52px;font-size:19px;color:#ccccdc;letter-spacing:0.2px;right:938.60px;">51.7 ms</div>
<div style="position:absolute;left:481px;top:349px;width:407px;height:1px;background:rgba(204,204,220,0.12);"></div>
<div style="position:absolute;left:493px;top:363px;width:21px;height:6px;background:#90c75a;border-radius:3px;"></div>
<div class="t" style="top:357.72px;font-size:19px;color:#ccccdc;letter-spacing:0.2px;left:527.00px;">p75</div>
<div class="t" style="top:357.72px;font-size:19px;color:#ccccdc;letter-spacing:0.2px;right:1127.50px;">48.6 ms</div>
<div class="t" style="top:357.72px;font-size:19px;color:#ccccdc;letter-spacing:0.2px;right:1033.00px;">46.5 ms</div>
<div class="t" style="top:357.72px;font-size:19px;color:#ccccdc;letter-spacing:0.2px;right:938.60px;">63.4 ms</div>
<div style="position:absolute;left:481px;top:384px;width:407px;height:1px;background:rgba(204,204,220,0.12);"></div>
<div style="position:absolute;left:493px;top:399px;width:21px;height:6px;background:#9cc95a;border-radius:3px;"></div>
<div class="t" style="top:392.92px;font-size:19px;color:#ccccdc;letter-spacing:0.2px;left:527.00px;">p90</div>
<div class="t" style="top:392.92px;font-size:19px;color:#ccccdc;letter-spacing:0.2px;right:1127.50px;">63.3 ms</div>
<div class="t" style="top:392.92px;font-size:19px;color:#ccccdc;letter-spacing:0.2px;right:1033.00px;">61.9 ms</div>
<div class="t" style="top:392.92px;font-size:19px;color:#ccccdc;letter-spacing:0.2px;right:938.60px;">70.3 ms</div>
<div style="position:absolute;left:481px;top:419px;width:407px;height:1px;background:rgba(204,204,220,0.12);"></div>
<div style="position:absolute;left:493px;top:434px;width:21px;height:6px;background:#a4cb52;border-radius:3px;"></div>
<div class="t" style="top:428.12px;font-size:19px;color:#ccccdc;letter-spacing:0.2px;left:527.00px;">p95</div>
<div class="t" style="top:428.12px;font-size:19px;color:#ccccdc;letter-spacing:0.2px;right:1127.50px;">69.2 ms</div>
<div class="t" style="top:428.12px;font-size:19px;color:#ccccdc;letter-spacing:0.2px;right:1033.00px;">68.4 ms</div>
<div class="t" style="top:428.12px;font-size:19px;color:#ccccdc;letter-spacing:0.2px;right:938.60px;">74.8 ms</div>
<div style="position:absolute;left:481px;top:455px;width:407px;height:1px;background:rgba(204,204,220,0.12);"></div>
<div style="position:absolute;left:493px;top:469px;width:21px;height:6px;background:#f2a23c;border-radius:3px;"></div>
<div class="t" style="top:463.32px;font-size:19px;color:#ccccdc;letter-spacing:0.2px;left:527.00px;">p98</div>
<div class="t" style="top:463.32px;font-size:19px;color:#ccccdc;letter-spacing:0.2px;right:1127.50px;">72.7 ms</div>
<div class="t" style="top:463.32px;font-size:19px;color:#ccccdc;letter-spacing:0.2px;right:1033.00px;">72.4 ms</div>
<div class="t" style="top:463.32px;font-size:19px;color:#ccccdc;letter-spacing:0.2px;right:938.60px;">187 ms</div>
<div style="position:absolute;left:481px;top:490px;width:407px;height:1px;background:rgba(204,204,220,0.12);"></div>
<div style="position:absolute;left:493px;top:504px;width:21px;height:6px;background:#f27a4c;border-radius:3px;"></div>
<div class="t" style="top:498.52px;font-size:19px;color:#ccccdc;letter-spacing:0.2px;left:527.00px;">p99</div>
<div class="t" style="top:498.52px;font-size:19px;color:#ccccdc;letter-spacing:0.2px;right:1127.50px;">73.8 ms</div>
<div class="t" style="top:498.52px;font-size:19px;color:#ccccdc;letter-spacing:0.2px;right:1033.00px;">73.7 ms</div>
<div class="t" style="top:498.52px;font-size:19px;color:#ccccdc;letter-spacing:0.2px;right:938.60px;">219 ms</div>
<div style="position:absolute;left:481px;top:525px;width:407px;height:1px;background:rgba(204,204,220,0.12);"></div>
<div style="position:absolute;left:493px;top:539px;width:21px;height:6px;background:#f2495c;border-radius:3px;"></div>
<div class="t" style="top:533.72px;font-size:19px;color:#ccccdc;letter-spacing:0.2px;left:527.00px;">p99.9</div>
<div class="t" style="top:533.72px;font-size:19px;color:#ccccdc;letter-spacing:0.2px;right:1127.50px;">74.9 ms</div>
<div class="t" style="top:533.72px;font-size:19px;color:#ccccdc;letter-spacing:0.2px;right:1033.00px;">74.9 ms</div>
<div class="t" style="top:533.72px;font-size:19px;color:#ccccdc;letter-spacing:0.2px;right:938.60px;">247 ms</div>
<div style="position:absolute;left:481px;top:560px;width:407px;height:1px;background:rgba(204,204,220,0.12);"></div>
<div style="position:absolute;left:988px;top:291px;width:375px;height:1px;background:rgba(204,204,220,0.09);"></div>
<div class="t" style="top:281.96px;font-size:18px;color:#ccccdc;letter-spacing:0.4px;right:834.00px;">100%</div>
<div style="position:absolute;left:988px;top:368px;width:375px;height:1px;background:rgba(204,204,220,0.09);"></div>
<div class="t" style="top:358.56px;font-size:18px;color:#ccccdc;letter-spacing:0.4px;right:834.00px;">80%</div>
<div style="position:absolute;left:988px;top:444px;width:375px;height:1px;background:rgba(204,204,220,0.09);"></div>
<div class="t" style="top:435.16px;font-size:18px;color:#ccccdc;letter-spacing:0.4px;right:834.00px;">60%</div>
<div style="position:absolute;left:988px;top:521px;width:375px;height:1px;background:rgba(204,204,220,0.09);"></div>
<div class="t" style="top:511.76px;font-size:18px;color:#ccccdc;letter-spacing:0.4px;right:834.00px;">40%</div>
<div style="position:absolute;left:988px;top:597px;width:375px;height:1px;background:rgba(204,204,220,0.09);"></div>
<div class="t" style="top:588.36px;font-size:18px;color:#ccccdc;letter-spacing:0.4px;right:834.00px;">20%</div>
<div style="position:absolute;left:988px;top:674px;width:375px;height:1px;background:rgba(204,204,220,0.09);"></div>
<div class="t" style="top:664.96px;font-size:18px;color:#ccccdc;letter-spacing:0.4px;right:834.00px;">0%</div>
<div style="position:absolute;left:1228px;top:291px;width:1px;height:390px;background:rgba(204,204,220,0.09);"></div>
<div class="t" style="top:687.76px;font-size:18px;color:#ccccdc;letter-spacing:0.2px;left:927.00px;width:600px;text-align:center;">18:20</div>
<svg style="position:absolute;left:0px;top:0px;pointer-events:none;" width="1813" height="1648" viewBox="0 0 1813 1648"><rect x="988" y="673" width="353" height="2" fill="#a3182a"/></svg>
<div class="t" style="top:287.42px;font-size:19px;color:#6e9fff;left:1421.40px;-webkit-text-stroke:0.35px #6e9fff;">Name</div>
<div class="t" style="top:287.42px;font-size:19px;color:#6e9fff;right:233.40px;-webkit-text-stroke:0.35px #6e9fff;">Last *</div>
<div class="t" style="top:287.42px;font-size:19px;color:#6e9fff;right:143.50px;-webkit-text-stroke:0.35px #6e9fff;">Min</div>
<div class="t" style="top:287.42px;font-size:19px;color:#6e9fff;right:49.20px;-webkit-text-stroke:0.35px #6e9fff;">Max</div>
<div style="position:absolute;left:1376px;top:313px;width:401px;height:1px;background:rgba(204,204,220,0.12);"></div>
<div style="position:absolute;left:1388px;top:328px;width:21px;height:6px;background:#ff780a;border-radius:3px;"></div>
<div class="t" style="top:322.52px;font-size:19px;color:#ccccdc;letter-spacing:0.2px;left:1421.40px;">All</div>
<div class="t" style="top:322.52px;font-size:19px;color:#ccccdc;letter-spacing:0.2px;right:233.40px;">0%</div>
<div class="t" style="top:322.52px;font-size:19px;color:#ccccdc;letter-spacing:0.2px;right:144.20px;">0%</div>
<div class="t" style="top:322.52px;font-size:19px;color:#ccccdc;letter-spacing:0.2px;right:50.00px;">0%</div>
<div style="position:absolute;left:1376px;top:349px;width:401px;height:1px;background:rgba(204,204,220,0.12);"></div>
<div style="position:absolute;left:1388px;top:363px;width:21px;height:6px;background:#fade2a;border-radius:3px;"></div>
<div class="t" style="top:357.72px;font-size:19px;color:#ccccdc;letter-spacing:0.2px;left:1421.40px;">4XX</div>
<div class="t" style="top:357.72px;font-size:19px;color:#ccccdc;letter-spacing:0.2px;right:233.40px;">0%</div>
<div class="t" style="top:357.72px;font-size:19px;color:#ccccdc;letter-spacing:0.2px;right:144.20px;">0%</div>
<div class="t" style="top:357.72px;font-size:19px;color:#ccccdc;letter-spacing:0.2px;right:50.00px;">0%</div>
<div style="position:absolute;left:1376px;top:384px;width:401px;height:1px;background:rgba(204,204,220,0.12);"></div>
<div style="position:absolute;left:1388px;top:399px;width:21px;height:6px;background:#c4162a;border-radius:3px;"></div>
<div class="t" style="top:392.92px;font-size:19px;color:#ccccdc;letter-spacing:0.2px;left:1421.40px;">5XX</div>
<div class="t" style="top:392.92px;font-size:19px;color:#ccccdc;letter-spacing:0.2px;right:233.40px;">0%</div>
<div class="t" style="top:392.92px;font-size:19px;color:#ccccdc;letter-spacing:0.2px;right:144.20px;">0%</div>
<div class="t" style="top:392.92px;font-size:19px;color:#ccccdc;letter-spacing:0.2px;right:50.00px;">0%</div>
<div style="position:absolute;left:1376px;top:419px;width:401px;height:1px;background:rgba(204,204,220,0.12);"></div>
<div style="position:absolute;left:64px;top:804px;width:366px;height:1px;background:rgba(204,204,220,0.09);"></div>
<div class="t" style="top:795.26px;font-size:18px;color:#ccccdc;right:1758.70px;">6</div>
<div style="position:absolute;left:64px;top:858px;width:366px;height:1px;background:rgba(204,204,220,0.09);"></div>
<div class="t" style="top:849.56px;font-size:18px;color:#ccccdc;right:1758.70px;">5</div>
<div style="position:absolute;left:64px;top:913px;width:366px;height:1px;background:rgba(204,204,220,0.09);"></div>
<div class="t" style="top:903.86px;font-size:18px;color:#ccccdc;right:1758.70px;">4</div>
<div style="position:absolute;left:64px;top:967px;width:366px;height:1px;background:rgba(204,204,220,0.09);"></div>
<div class="t" style="top:958.16px;font-size:18px;color:#ccccdc;right:1758.70px;">3</div>
<div style="position:absolute;left:64px;top:1021px;width:366px;height:1px;background:rgba(204,204,220,0.09);"></div>
<div class="t" style="top:1012.46px;font-size:18px;color:#ccccdc;right:1758.70px;">2</div>
<div style="position:absolute;left:64px;top:1076px;width:366px;height:1px;background:rgba(204,204,220,0.09);"></div>
<div class="t" style="top:1066.76px;font-size:18px;color:#ccccdc;right:1758.70px;">1</div>
<div style="position:absolute;left:64px;top:1130px;width:366px;height:1px;background:rgba(204,204,220,0.09);"></div>
<div class="t" style="top:1121.06px;font-size:18px;color:#ccccdc;right:1758.70px;">0</div>
<div style="position:absolute;left:297px;top:804px;width:1px;height:332px;background:rgba(204,204,220,0.09);"></div>
<div class="t" style="top:1143.76px;font-size:18px;color:#ccccdc;letter-spacing:0.2px;left:-3.00px;width:600px;text-align:center;">18:20</div>
<svg style="position:absolute;left:0px;top:0px;pointer-events:none;" width="1813" height="1648" viewBox="0 0 1813 1648"><line x1="62" y1="967.5" x2="407.7" y2="967.5" stroke="#73bf69" stroke-width="1.8"/><circle cx="76.50" cy="967.5" r="3.7" fill="#73bf69"/><circle cx="113.30" cy="967.5" r="3.7" fill="#73bf69"/><circle cx="150.10" cy="967.5" r="3.7" fill="#73bf69"/><circle cx="186.90" cy="967.5" r="3.7" fill="#73bf69"/><circle cx="223.70" cy="967.5" r="3.7" fill="#73bf69"/><circle cx="260.50" cy="967.5" r="3.7" fill="#73bf69"/><circle cx="297.30" cy="967.5" r="3.7" fill="#73bf69"/><circle cx="334.10" cy="967.5" r="3.7" fill="#73bf69"/><circle cx="370.90" cy="967.5" r="3.7" fill="#73bf69"/><circle cx="407.70" cy="967.5" r="3.7" fill="#73bf69"/></svg>
<div style="position:absolute;left:508px;top:804px;width:366px;height:1px;background:rgba(204,204,220,0.09);"></div>
<div class="t" style="top:795.26px;font-size:18px;color:#ccccdc;right:1314.70px;">4</div>
<div style="position:absolute;left:508px;top:886px;width:366px;height:1px;background:rgba(204,204,220,0.09);"></div>
<div class="t" style="top:876.71px;font-size:18px;color:#ccccdc;right:1314.70px;">3</div>
<div style="position:absolute;left:508px;top:967px;width:366px;height:1px;background:rgba(204,204,220,0.09);"></div>
<div class="t" style="top:958.16px;font-size:18px;color:#ccccdc;right:1314.70px;">2</div>
<div style="position:absolute;left:508px;top:1049px;width:366px;height:1px;background:rgba(204,204,220,0.09);"></div>
<div class="t" style="top:1039.61px;font-size:18px;color:#ccccdc;right:1314.70px;">1</div>
<div style="position:absolute;left:508px;top:1130px;width:366px;height:1px;background:rgba(204,204,220,0.09);"></div>
<div class="t" style="top:1121.06px;font-size:18px;color:#ccccdc;right:1314.70px;">0</div>
<div style="position:absolute;left:741px;top:804px;width:1px;height:332px;background:rgba(204,204,220,0.09);"></div>
<div class="t" style="top:1143.76px;font-size:18px;color:#ccccdc;letter-spacing:0.2px;left:441.00px;width:600px;text-align:center;">18:20</div>
<svg style="position:absolute;left:0px;top:0px;pointer-events:none;" width="1813" height="1648" viewBox="0 0 1813 1648"><line x1="506" y1="967.5" x2="851.7" y2="967.5" stroke="#73bf69" stroke-width="1.8"/><circle cx="520.50" cy="967.5" r="3.7" fill="#73bf69"/><circle cx="557.30" cy="967.5" r="3.7" fill="#73bf69"/><circle cx="594.10" cy="967.5" r="3.7" fill="#73bf69"/><circle cx="630.90" cy="967.5" r="3.7" fill="#73bf69"/><circle cx="667.70" cy="967.5" r="3.7" fill="#73bf69"/><circle cx="704.50" cy="967.5" r="3.7" fill="#73bf69"/><circle cx="741.30" cy="967.5" r="3.7" fill="#73bf69"/><circle cx="778.10" cy="967.5" r="3.7" fill="#73bf69"/><circle cx="814.90" cy="967.5" r="3.7" fill="#73bf69"/><circle cx="851.70" cy="967.5" r="3.7" fill="#73bf69"/></svg>
<div style="position:absolute;left:915px;top:780px;width:430px;height:166px;background:linear-gradient(102deg,#1346eb,#4aa0f0);border-radius:3px;"></div>
<svg style="position:absolute;left:0px;top:0px;pointer-events:none;" width="1813" height="1648" viewBox="0 0 1813 1648"><g><path d="M915,923.1 L931.8,920 L974.6,912 L1017.4,904 L1060.2,896 L1103,888 L1145.8,880.3 L1188.6,872.2 L1230,863.7 L1274,863.7 L1317.4,865 L1317.4,946 L915,946 Z" fill="rgba(255,255,255,0.38)"/><path d="M915,923.1 L931.8,920 L974.6,912 L1017.4,904 L1060.2,896 L1103,888 L1145.8,880.3 L1188.6,872.2 L1230,863.7 L1274,863.7 L1317.4,865" fill="none" stroke="#b3dcff" stroke-width="2"/><circle cx="931.8" cy="920" r="1.6" fill="#b3dcff"/><circle cx="974.6" cy="912" r="1.6" fill="#b3dcff"/><circle cx="1017.4" cy="904" r="1.6" fill="#b3dcff"/><circle cx="1060.2" cy="896" r="1.6" fill="#b3dcff"/><circle cx="1103" cy="888" r="1.6" fill="#b3dcff"/><circle cx="1145.8" cy="880.3" r="1.6" fill="#b3dcff"/><circle cx="1188.6" cy="872.2" r="1.6" fill="#b3dcff"/><circle cx="1230" cy="863.7" r="1.6" fill="#b3dcff"/><circle cx="1274" cy="863.7" r="1.6" fill="#b3dcff"/><circle cx="1317.4" cy="865" r="1.6" fill="#b3dcff"/></g></svg>
<div class="t" style="top:835.99px;font-size:54px;color:#ffffff;left:828.30px;width:600px;text-align:center;-webkit-text-stroke:1.3px #ffffff;">140</div>
<div style="position:absolute;left:1359px;top:780px;width:430px;height:166px;background:linear-gradient(102deg,#80110f,#b0163e);border-radius:3px;"></div>
<div class="t" style="top:808.38px;font-size:110px;color:#ffffff;left:1273.00px;width:600px;text-align:center;-webkit-text-stroke:2.4px #ffffff;transform:scaleX(1.05);">0</div>
<div style="position:absolute;left:915px;top:1008px;width:430px;height:166px;background:linear-gradient(102deg,#3f9a44,#6cb558);border-radius:3px;"></div>
<svg style="position:absolute;left:0px;top:0px;pointer-events:none;" width="1813" height="1648" viewBox="0 0 1813 1648"><g><path d="M915,1165.2 L931.8,1161.3 L974.6,1151.3 L1017.4,1141.6 L1060.2,1131.6 L1103,1122 L1145.8,1112 L1188.6,1102.6 L1230.2,1091.7 L1274,1091.7 L1317.4,1093.6 L1317.4,1174 L915,1174 Z" fill="rgba(255,255,255,0.4)"/><path d="M915,1165.2 L931.8,1161.3 L974.6,1151.3 L1017.4,1141.6 L1060.2,1131.6 L1103,1122 L1145.8,1112 L1188.6,1102.6 L1230.2,1091.7 L1274,1091.7 L1317.4,1093.6" fill="none" stroke="#d2f5c8" stroke-width="2"/><circle cx="931.8" cy="1161.3" r="1.6" fill="#d2f5c8"/><circle cx="974.6" cy="1151.3" r="1.6" fill="#d2f5c8"/><circle cx="1017.4" cy="1141.6" r="1.6" fill="#d2f5c8"/><circle cx="1060.2" cy="1131.6" r="1.6" fill="#d2f5c8"/><circle cx="1103" cy="1122" r="1.6" fill="#d2f5c8"/><circle cx="1145.8" cy="1112" r="1.6" fill="#d2f5c8"/><circle cx="1188.6" cy="1102.6" r="1.6" fill="#d2f5c8"/><circle cx="1230.2" cy="1091.7" r="1.6" fill="#d2f5c8"/><circle cx="1274" cy="1091.7" r="1.6" fill="#d2f5c8"/><circle cx="1317.4" cy="1093.6" r="1.6" fill="#d2f5c8"/></g></svg>
<div class="t" style="top:1030.51px;font-size:45px;color:#ffffff;left:935.00px;-webkit-text-stroke:0.8px #ffffff;">http</div>
<div class="t" style="top:1032.39px;font-size:54px;color:#ffffff;right:490.10px;-webkit-text-stroke:1.3px #ffffff;">144</div>
<div style="position:absolute;left:1359px;top:1008px;width:430px;height:166px;background:linear-gradient(102deg,#b23ecd,#9a62d8);border-radius:3px;"></div>
<svg style="position:absolute;left:0px;top:0px;pointer-events:none;" width="1813" height="1648" viewBox="0 0 1813 1648"><g><path d="M1359,1164.8 L1375.9,1161 L1418.3,1151 L1461,1141.3 L1503.8,1131.3 L1546.7,1121.7 L1589.6,1111.7 L1632.5,1102.3 L1674.9,1091.4 L1718.3,1091.4 L1761.2,1093.3 L1761.2,1174 L1359,1174 Z" fill="rgba(255,255,255,0.4)"/><path d="M1359,1164.8 L1375.9,1161 L1418.3,1151 L1461,1141.3 L1503.8,1131.3 L1546.7,1121.7 L1589.6,1111.7 L1632.5,1102.3 L1674.9,1091.4 L1718.3,1091.4 L1761.2,1093.3" fill="none" stroke="#f3d2ff" stroke-width="2"/><circle cx="1375.9" cy="1161" r="1.6" fill="#f3d2ff"/><circle cx="1418.3" cy="1151" r="1.6" fill="#f3d2ff"/><circle cx="1461" cy="1141.3" r="1.6" fill="#f3d2ff"/><circle cx="1503.8" cy="1131.3" r="1.6" fill="#f3d2ff"/><circle cx="1546.7" cy="1121.7" r="1.6" fill="#f3d2ff"/><circle cx="1589.6" cy="1111.7" r="1.6" fill="#f3d2ff"/><circle cx="1632.5" cy="1102.3" r="1.6" fill="#f3d2ff"/><circle cx="1674.9" cy="1091.4" r="1.6" fill="#f3d2ff"/><circle cx="1718.3" cy="1091.4" r="1.6" fill="#f3d2ff"/><circle cx="1761.2" cy="1093.3" r="1.6" fill="#f3d2ff"/></g></svg>
<div class="t" style="top:1030.71px;font-size:45px;color:#ffffff;letter-spacing:-1.1px;left:1379.00px;-webkit-text-stroke:0.8px #ffffff;">http/1.1</div>
<div class="t" style="top:1032.39px;font-size:54px;color:#ffffff;right:46.40px;-webkit-text-stroke:1.3px #ffffff;">144</div>
<div class="t" style="top:1252.88px;font-size:22px;color:#9a9aa6;left:46.00px;-webkit-text-stroke:0.35px #9a9aa6;">Endpoint</div>
<div class="t" style="top:1252.88px;font-size:22px;color:#9a9aa6;left:447.00px;-webkit-text-stroke:0.35px #9a9aa6;">Requests</div>
<div style="position:absolute;left:437px;top:1248px;width:1px;height:149px;background:rgba(204,204,220,0.12);"></div>
<div style="position:absolute;left:36px;top:1289px;width:852px;height:1px;background:rgba(204,204,220,0.12);"></div>
<div style="position:absolute;left:36px;top:1343px;width:852px;height:1px;background:rgba(204,204,220,0.12);"></div>
<div style="position:absolute;left:36px;top:1397px;width:852px;height:1px;background:rgba(204,204,220,0.12);"></div>
<div class="t" style="top:1305.68px;font-size:22px;color:#6e9fff;letter-spacing:0.1px;left:46.00px;">GET /healthz</div>
<div class="t" style="top:1359.58px;font-size:22px;color:#6e9fff;letter-spacing:0.1px;left:46.00px;">GET /metrics</div>
<div style="position:absolute;left:447px;top:1299px;width:360px;height:36px;background:linear-gradient(90deg,#5794f2,#c079dc);border-radius:3px;"></div>
<div style="position:absolute;left:447px;top:1353px;width:375px;height:36px;background:#22252b;border-radius:3px;"></div>
<div style="position:absolute;left:447px;top:1353px;width:2px;height:36px;background:#5794f2;"></div>
<div class="t" style="top:1305.68px;font-size:22px;color:#ccccdc;right:949.70px;">121</div>
<div class="t" style="top:1359.58px;font-size:22px;color:#ccccdc;right:949.70px;">21</div>
<div class="t" style="top:1419.10px;font-size:28px;color:#9a9aa6;letter-spacing:0.2px;left:1052.00px;width:600px;text-align:center;">No data</div>
</body></html>
